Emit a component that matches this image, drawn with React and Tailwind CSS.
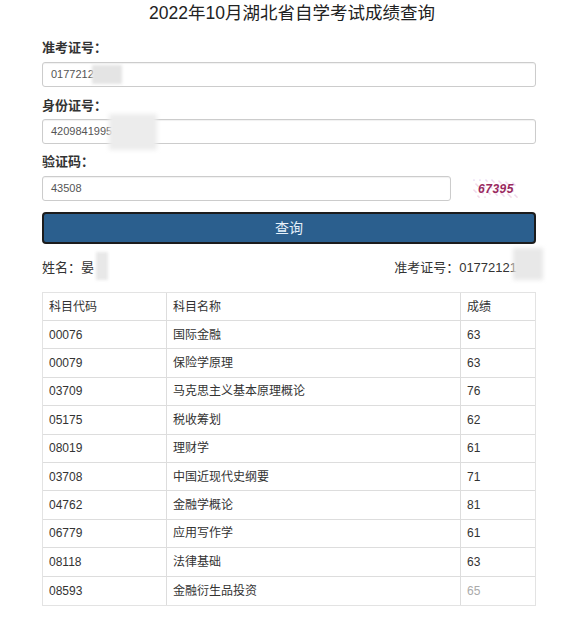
import React from "react";

const rows = [
  ["00076", "国际金融", "63"],
  ["00079", "保险学原理", "63"],
  ["03709", "马克思主义基本原理概论", "76"],
  ["05175", "税收筹划", "62"],
  ["08019", "理财学", "61"],
  ["03708", "中国近现代史纲要", "71"],
  ["04762", "金融学概论", "81"],
  ["06779", "应用写作学", "61"],
  ["08118", "法律基础", "63"],
  ["08593", "金融衍生品投资", "65"],
];

const font = { fontFamily: '"Liberation Sans", "Noto Sans CJK SC", sans-serif' };

function Captcha() {
  const dots = [];
  for (let i = 0; i < 60; i++) {
    const x = (i * 37) % 44;
    const y = (i * 53) % 18;
    dots.push(<circle key={i} cx={x + 1} cy={y + 1} r="0.6" fill={i % 3 ? "#e0a0c8" : "#c8a0e0"} />);
  }
  return (
    <div className="relative w-[46px] h-[20px] flex items-center justify-center">
      <svg className="absolute inset-0" width="46" height="20">{dots}</svg>
      <span className="relative text-[12px] font-bold italic text-[#9a2a60] tracking-[0.5px]">67395</span>
    </div>
  );
}

export default function App() {
  return (
    <div className="w-[584px] h-[640px] bg-white text-[#333] pl-[42px] pr-[48px] overflow-hidden" style={font}>
      <div className="h-[30px] pt-[3px] pl-[6px] text-center text-[17.5px] leading-[20px] text-[#222]">
        2022年10月湖北省自学考试成绩查询
      </div>

      <div className="mt-[8px] h-[20px] flex items-center text-[13px] font-bold text-[#333]">准考证号：</div>
      <div className="relative mt-[4px] h-[25px] border border-[#ccc] rounded-[3px] flex items-center pl-[8px] text-[11px] text-[#555] shadow-[inset_0_1px_1px_rgba(0,0,0,0.06)]">
        0177212
        <span className="absolute left-[49px] top-[2px] w-[30px] h-[19px] bg-[#e4e4e4] blur-[1.5px]" />
      </div>

      <div className="mt-[9px] h-[20px] flex items-center text-[13px] font-bold text-[#333]">身份证号：</div>
      <div className="relative mt-[3px] h-[25px] border border-[#ccc] rounded-[3px] flex items-center pl-[8px] text-[11px] text-[#555] shadow-[inset_0_1px_1px_rgba(0,0,0,0.06)]">
        4209841995
        <span className="absolute left-[66px] top-[-6px] w-[48px] h-[36px] bg-[#ececec] blur-[2px]" />
      </div>

      <div className="mt-[8px] h-[20px] flex items-center text-[13px] font-bold text-[#333]">验证码：</div>
      <div className="mt-[4px] flex items-center">
        <div className="w-[409px] h-[25px] border border-[#ccc] rounded-[3px] flex items-center pl-[8px] text-[11px] text-[#555] shadow-[inset_0_1px_1px_rgba(0,0,0,0.06)]">
          43508
        </div>
        <div className="ml-[22px]"><Captcha /></div>
      </div>

      <div className="mt-[11px] h-[32px] rounded-[4px] border-2 border-[#1c1c1c] bg-[#2b5f8e] flex items-center justify-center text-[14px] text-[#e6f1fb]">
        查询
      </div>

      <div className="mt-[12px] h-[24px] flex items-center justify-between text-[13px] text-[#333]">
        <div className="relative flex items-center">
          姓名：晏
          <span className="absolute left-[54px] top-[-6px] w-[12px] h-[28px] bg-[#e8e8e8] blur-[1.5px]" />
        </div>
        <div className="relative flex items-center mr-[-5px] pr-[24px]">
          准考证号：01772121
          <span className="absolute right-[-2px] top-[-10px] w-[30px] h-[32px] bg-[#e8e8e8] blur-[2px]" />
        </div>
      </div>

      <div className="mt-[12px] border border-[#e3e3e3] text-[12px] text-[#333]">
        <div className="flex h-[28px] border-b border-[#ddd]">
          <div className="w-[124px] border-r border-[#ddd] flex items-center pl-[6px]">科目代码</div>
          <div className="w-[294px] border-r border-[#ddd] flex items-center pl-[6px]">科目名称</div>
          <div className="flex-1 flex items-center pl-[6px]">成绩</div>
        </div>
        {rows.map((r, i) => (
          <div key={r[0]} className={`flex h-[28.4px] ${i < rows.length - 1 ? "border-b border-[#ddd]" : ""}`}>
            <div className="w-[124px] border-r border-[#ddd] flex items-center pl-[6px]">{r[0]}</div>
            <div className="w-[294px] border-r border-[#ddd] flex items-center pl-[6px]">{r[1]}</div>
            <div className={`flex-1 flex items-center pl-[6px] ${i === rows.length - 1 ? "text-[#aaa]" : ""}`}>{r[2]}</div>
          </div>
        ))}
      </div>
    </div>
  );
}
